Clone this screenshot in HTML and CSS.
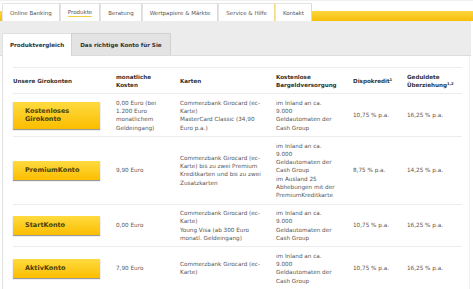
FILE: index.html
```html
<html>
<head>
<meta charset="utf-8">
<link rel="stylesheet" href="styles.css">
</head>
<body>

<div class="topnav">
    <div class="nav-edge"></div>
    <a class="nav-tab">Online Banking</a>
    <a class="nav-tab active"><span>Produkte</span></a>
    <a class="nav-tab">Beratung</a>
    <a class="nav-tab">Wertpapiere &amp; Märkte</a>
    <a class="nav-tab">Service &amp; Hilfe</a>
    <a class="nav-tab">Kontakt</a>
    <div class="nav-fill"></div>
</div>

<div class="subnav">
    <a class="sub-tab active">Produktvergleich</a>
    <a class="sub-tab">Das richtige Konto für Sie</a>
</div>

<div class="content">
    <table class="compare">
        <colgroup>
            <col class="c1"><col class="c2"><col class="c3"><col class="c4"><col class="c5"><col class="c6">
        </colgroup>
        <tr>
            <th>Unsere Girokonten</th>
            <th>monatliche<br>Kosten</th>
            <th>Karten</th>
            <th>Kostenlose<br>Bargeldversorgung</th>
            <th>Dispokredit<sup>1</sup></th>
            <th>Geduldete<br>Überziehung<sup>1,2</sup></th>
        </tr>
        <tr>
            <td><a class="konto-btn">Kostenloses<br>Girokonto</a></td>
            <td>0,00 Euro (bei<br>1.200 Euro<br>monatlichem<br>Geldeingang)</td>
            <td>Commerzbank Girocard (ec-<br>Karte)<br>MasterCard Classic (34,90<br>Euro p.a.)</td>
            <td>im Inland an ca.<br>9.000<br>Geldautomaten der<br>Cash Group</td>
            <td>10,75 % p.a.</td>
            <td>16,25 % p.a.</td>
        </tr>
        <tr>
            <td><a class="konto-btn">PremiumKonto</a></td>
            <td>9,90 Euro</td>
            <td>Commerzbank Girocard (ec-<br>Karte) bis zu zwei Premium<br>Kreditkarten und bis zu zwei<br>Zusatzkarten</td>
            <td>im Inland an ca.<br>9.000<br>Geldautomaten der<br>Cash Group<br>im Ausland 25<br>Abhebungen mit der<br>PremiumKreditkarte</td>
            <td>8,75 % p.a.</td>
            <td>14,25 % p.a.</td>
        </tr>
        <tr>
            <td><a class="konto-btn">StartKonto</a></td>
            <td>0,00 Euro</td>
            <td>Commerzbank Girocard (ec-<br>Karte)<br>Young Visa (ab 300 Euro<br>monatl. Geldeingang)</td>
            <td>im Inland an ca.<br>9.000<br>Geldautomaten der<br>Cash Group</td>
            <td>10,75 % p.a.</td>
            <td>16,25 % p.a.</td>
        </tr>
        <tr>
            <td><a class="konto-btn">AktivKonto</a></td>
            <td>7,90 Euro</td>
            <td>Commerzbank Girocard (ec-<br>Karte)</td>
            <td>im Inland an ca.<br>9.000<br>Geldautomaten der<br>Cash Group</td>
            <td>10,75 % p.a.</td>
            <td>16,25 % p.a.</td>
        </tr>
    </table>
</div>

</body>
</html>
```

FILE: styles.css
```css
body {
    margin: 0;
    width: 473px;
    background-color: #ffffff;
    font-family: "DejaVu Sans", Verdana, sans-serif;
    color: #555555;
    overflow: hidden;
}

/* top navigation */
.topnav {
    display: flex;
    align-items: flex-end;
    height: 21px;
    border-top: 1px solid #f0f0f0;
    box-sizing: border-box;
}

.nav-edge {
    width: 2px;
    height: 10px;
    background: linear-gradient(#fdd63c, #f6be0a);
}

.nav-tab {
    display: flex;
    align-items: center;
    height: 18px;
    padding: 0 7px 0 7px;
    box-sizing: border-box;
    background-color: #ffffff;
    border: 1px solid #e4e4e4;
    border-bottom: none;
    border-right: 1px solid #f4dc8c;
    font-size: 5.5px;
    color: #555555;
}

.nav-tab.active span {
    border-bottom: 1px solid #f7cf3c;
    padding-bottom: 1px;
}

.nav-fill {
    flex: 1;
    height: 10px;
    background: linear-gradient(#fdd63c, #f6be0a);
}

/* sub navigation */
.subnav {
    display: flex;
    align-items: flex-end;
    width: 471px;
    height: 35px;
    padding-left: 2px;
    box-sizing: border-box;
    background-color: #ececec;
    border-bottom: 1px solid #dcdcdc;
}

.sub-tab {
    display: flex;
    align-items: center;
    height: 22px;
    padding: 0 8px;
    box-sizing: border-box;
    background-color: #e3e3e3;
    border: 1px solid #d2d2d2;
    border-bottom: none;
    font-size: 5.6px;
    font-weight: bold;
    color: #333333;
}

.sub-tab.active {
    height: 23px;
    margin-bottom: -1px;
    padding: 0 7px;
    background-color: #ffffff;
    border-color: #e0e0e0;
    border-right: none;
}

/* content */
.content {
    margin-left: 2px;
    width: 468px;
    height: 240px;
    border-left: 1px solid #e0e0e0;
    border-right: 1px solid #f2f2f2;
    padding-top: 11px;
    padding-left: 10px;
    box-sizing: border-box;
}

.compare {
    border-collapse: collapse;
    table-layout: fixed;
    width: 449px;
    font-size: 5.7px;
    line-height: 8.2px;
}

.compare col.c1 { width: 103px; }
.compare col.c2 { width: 64px; }
.compare col.c3 { width: 96px; }
.compare col.c4 { width: 77px; }
.compare col.c5 { width: 54px; }
.compare col.c6 { width: 55px; }

.compare tr {
    border-top: 1px solid #ececec;
}

.compare th {
    padding: 4.5px 0;
    text-align: left;
    vertical-align: middle;
    font-size: 5.6px;
    font-weight: bold;
    color: #333333;
}

.compare td {
    padding: 4.5px 0;
    vertical-align: middle;
    white-space: nowrap;
}

.compare sup {
    font-size: 3.8px;
    line-height: 0;
    vertical-align: 2px;
}

.konto-btn {
    display: block;
    width: 87px;
    padding: 5.5px 12px;
    box-sizing: border-box;
    background: linear-gradient(#ffdb40, #fbbd00);
    box-shadow: 0 1px 1px #9a9a9a;
    font-size: 6.5px;
    line-height: 8.2px;
    font-weight: bold;
    color: #4a3f0a;
}
```
